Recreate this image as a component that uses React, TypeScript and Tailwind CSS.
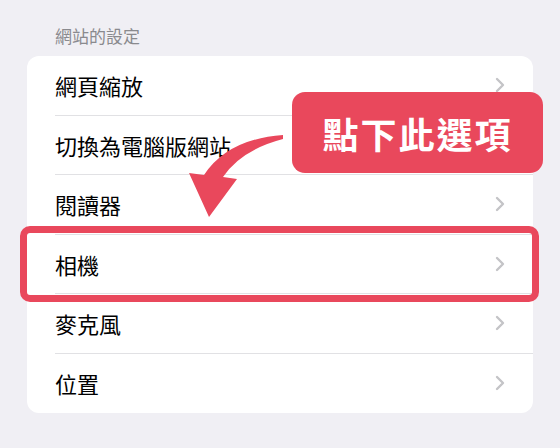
import React from "react";

const rows = ["網頁縮放", "切換為電腦版網站", "閱讀器", "相機", "麥克風", "位置"];

function Chevron() {
  return (
    <svg width="10" height="16" viewBox="0 0 10 16" className="shrink-0">
      <polyline points="2,2 8,8 2,14" fill="none" stroke="#c4c4c7" strokeWidth="2.4" strokeLinecap="round" strokeLinejoin="round" />
    </svg>
  );
}

export default function App() {
  return (
    <div
      className="relative w-[560px] h-[448px] overflow-hidden bg-[#f0eff4]"
      style={{ fontFamily: '"Noto Sans CJK TC", "Noto Sans", sans-serif' }}
    >
      <div className="pt-[25px] px-[27px]">
        <div className="pl-[28px] text-[17px] leading-[22px] text-[#8a8a8e] mb-[9px]">網站的設定</div>
        <div className="bg-white rounded-[12px] overflow-hidden">
          {rows.map((label, i) => (
            <div key={label} className="pl-[28px] h-[59.5px]">
              <div
                className={
                  "h-full flex items-center justify-between pr-[28px] " +
                  (i < rows.length - 1 ? "border-b border-[#e1e1e4]" : "")
                }
              >
                <span className="text-[22px] text-black leading-none">{label}</span>
                <Chevron />
              </div>
            </div>
          ))}
        </div>
      </div>

      {/* highlight around the camera row */}
      <div className="absolute left-[20px] top-[226px] w-[519px] h-[76px] border-[7px] border-[#e9485c] rounded-[10px]" />

      {/* curved arrow */}
      <svg className="absolute left-0 top-0" width="560" height="448" viewBox="0 0 560 448">
        <path
          d="M283,135 Q228,139 204,175 L189,173 L209,217 L237,179 L223,177 Q241,150 283,139 Z"
          fill="#e9485c"
        />
      </svg>

      {/* callout */}
      <div className="absolute left-[292px] top-[92px] w-[251px] h-[81px] rounded-[13px] bg-[#e9485c] flex items-center justify-center">
        <span className="text-white font-bold text-[36px] tracking-[2px] leading-none">點下此選項</span>
      </div>
    </div>
  );
}
